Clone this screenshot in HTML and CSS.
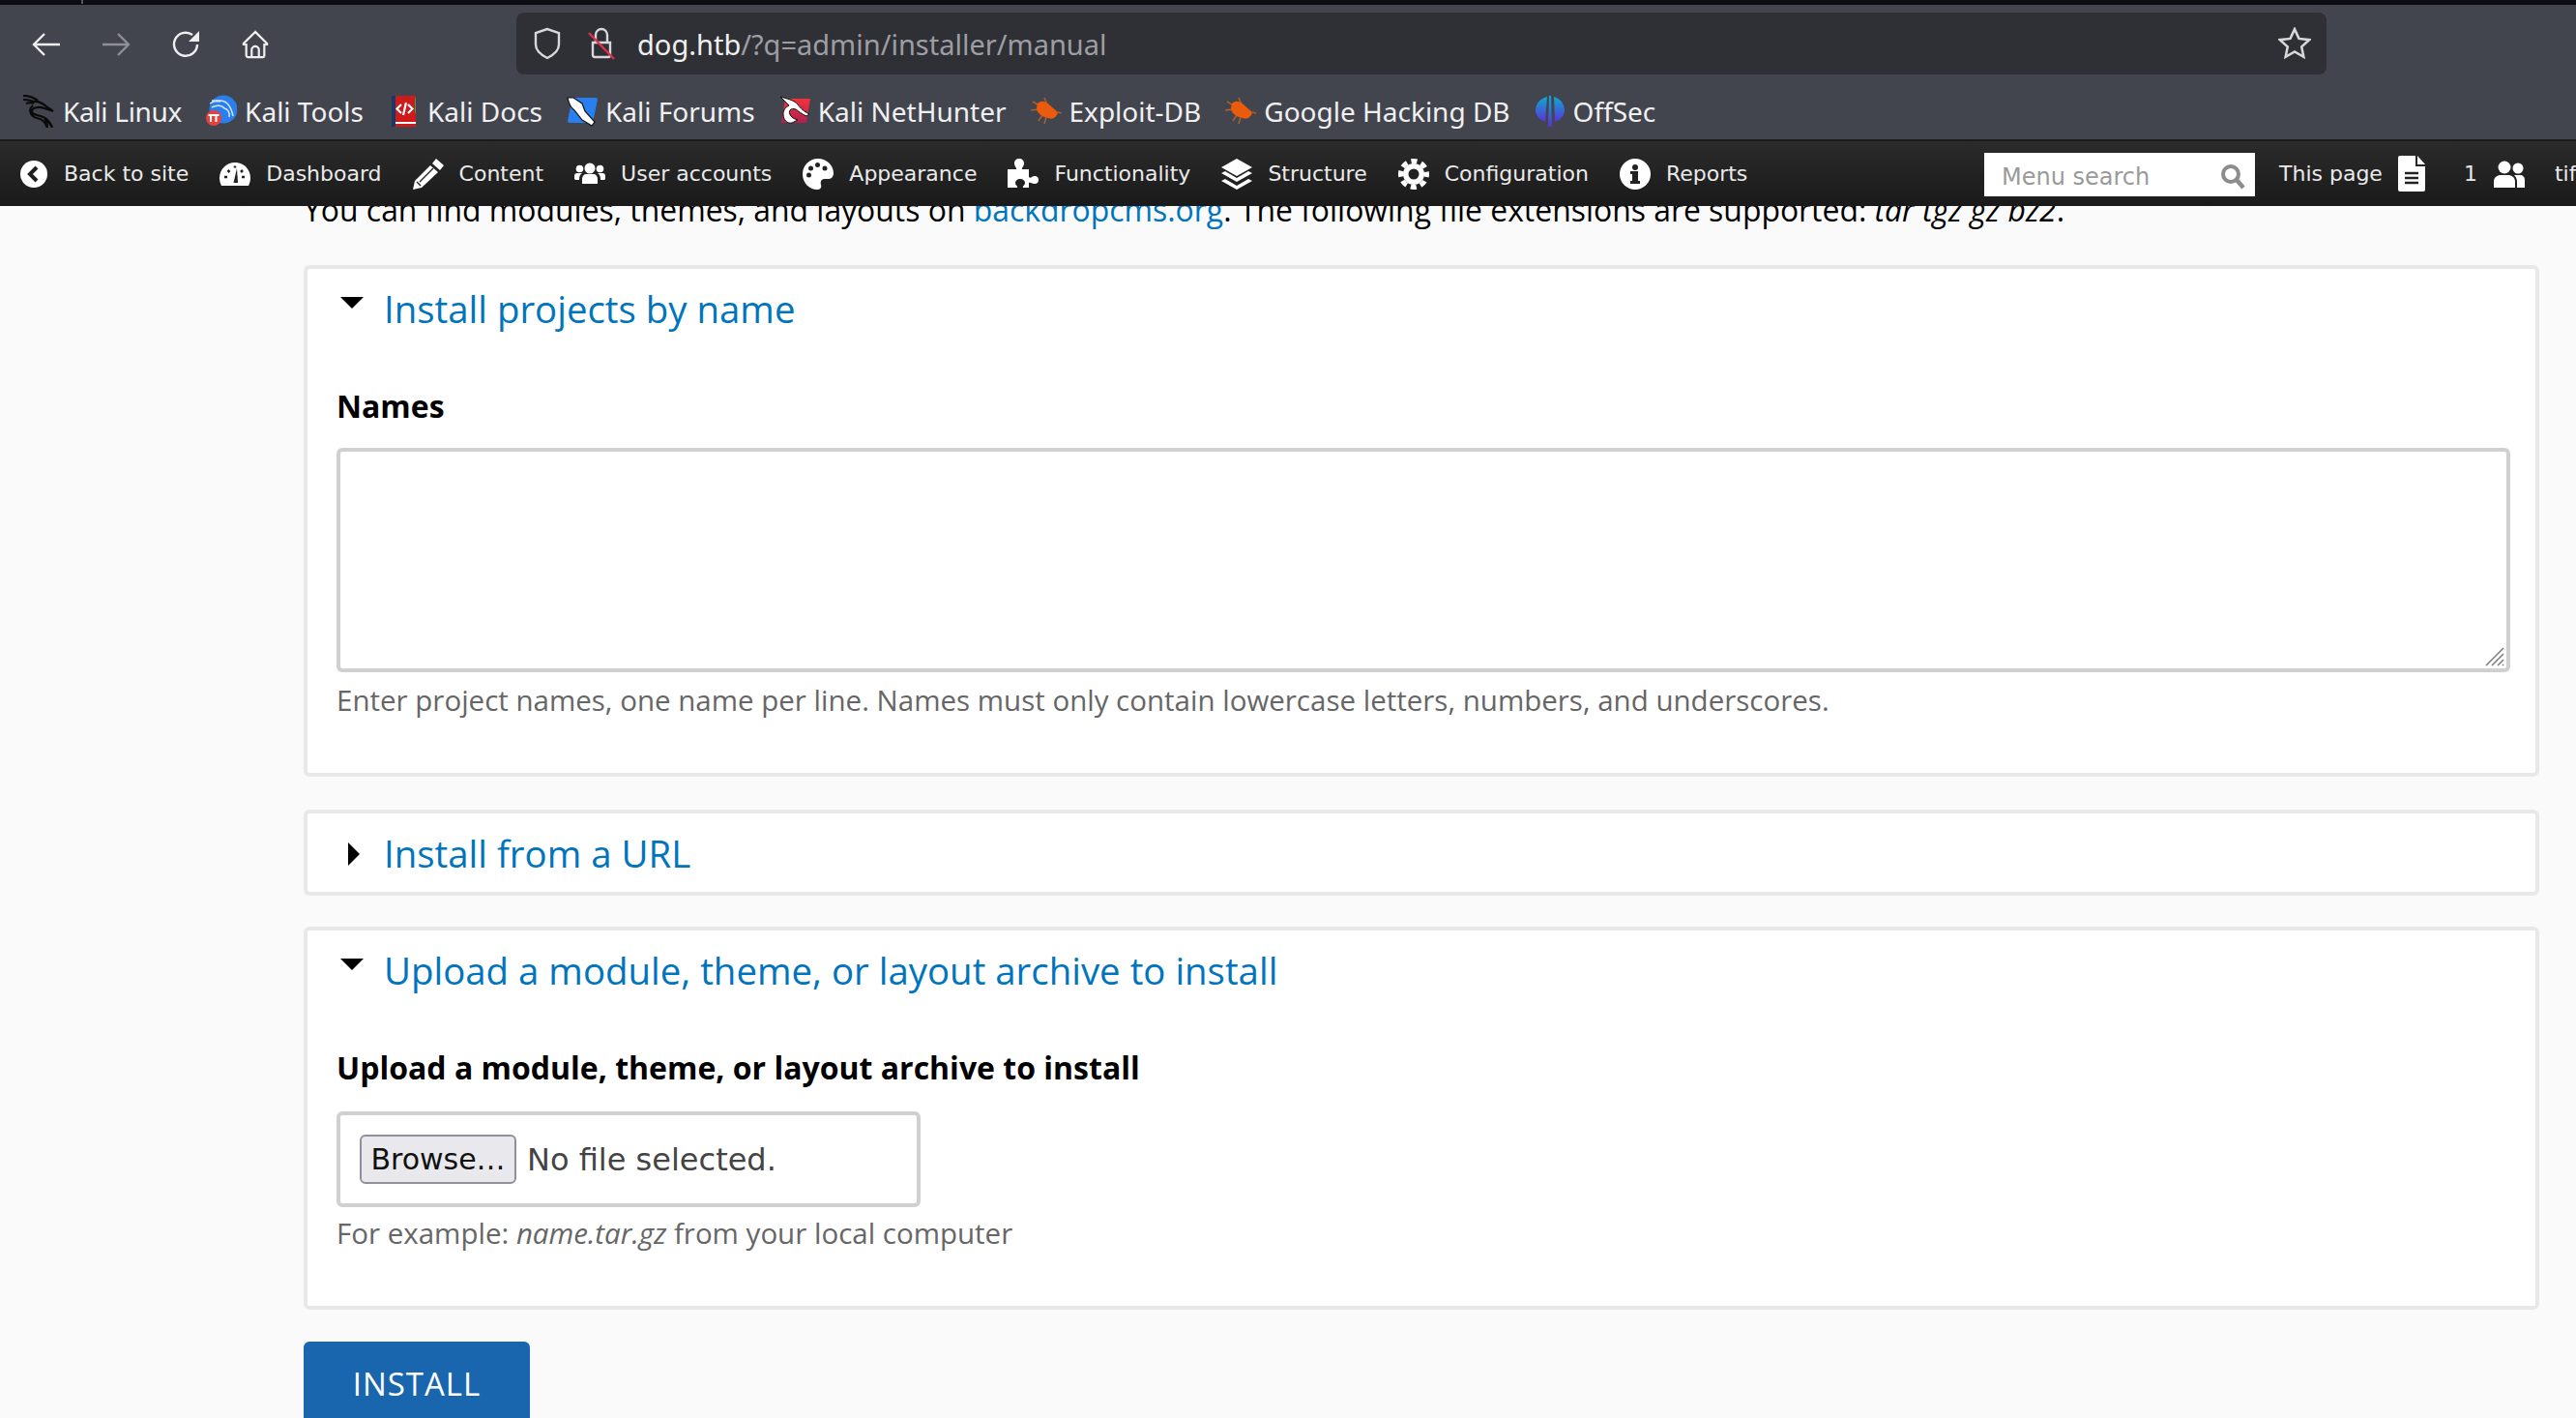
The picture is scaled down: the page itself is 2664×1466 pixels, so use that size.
FILE: index.html
```html
<!DOCTYPE html>
<html lang="en">
<head>
<meta charset="utf-8">
<title>Manual installation</title>
<link rel="stylesheet" href="styles.css">
</head>
<body>
<div class="topstrip"><span class="tabsep"></span></div>
<header class="chrome">
  <div class="navrow">
    <div class="navbtns">
      <svg class="navicon" viewBox="0 0 28 30"><path d="M28 15H2M12 4 1 15l11 11"/></svg>
      <svg class="navicon dim" viewBox="0 0 28 30"><path d="M0 15h26M16 4l11 11-11 11"/></svg>
      <svg class="navicon" viewBox="0 0 28 30"><path d="M26 15a12 12 0 1 1-5-10"/><path class="solid" d="M28 1v11H17Z"/></svg>
      <svg class="navicon" viewBox="0 0 30 30"><path d="M15 1 2 14v1h3v12a2 2 0 0 0 2 2h16a2 2 0 0 0 2-2V15h3v-1ZM11 29v-8a4 4 0 0 1 8 0v8"/></svg>
    </div>
    <div class="urlbar">
      <svg class="urlicon" viewBox="0 0 30 34"><path d="M15 2 3 6v12c0 7 6 11 12 14 6-3 12-7 12-14V6Z"/></svg>
      <svg class="urlicon lock" viewBox="0 0 28 34"><path d="M8 16V8a6 6 0 0 1 12 0v8M5 16h18v13a2 2 0 0 1-2 2H7a2 2 0 0 1-2-2Z"/><path class="slash" d="M1 6l26 27"/></svg>
      <span class="url"><span class="host">dog.htb</span>/?q=admin/installer/manual</span>
      <svg class="urlicon star" viewBox="0 0 32 32"><path d="m16 2 4.200 9.200 10 1.200-7.400 6.800 2 9.800-8.800-5-8.800 5 2-9.800-7.400-6.800 10-1.200Z"/></svg>
    </div>
  </div>
  <nav class="bookmarks">
    <a class="bm linux"><svg class="fav" viewBox="0 0 32 34"><path class="k" d="M0 1c6 0 11 2 15 5M0 5c5 0 9 1 12 3M3 9c3-1 6-1 8 0M8 8c6-3 13 1 17 5l6 4-9-3c-6-2-13-1-13 3 0 5 9 3 15 8 3 3 5 5 6 9-2-4-4-7-7-8 1 2 2 5 2 8-2-6-5-9-11-10-7-2-9-9-4-13"/></svg>Kali Linux</a>
    <a class="bm"><svg class="fav" viewBox="0 0 32 34"><circle cx="18" cy="15" r="14.500" fill="#2b7fec"/><path d="M4 9c6-4 14-4 18 0 3 3 5 8 6 13M6 13c5-3 11-2 13 1M19 14c4 1 6 5 5 9M6 6c3 0 6 0 9 1" fill="none" stroke="#d6e6ff" stroke-width="1.500"/><circle cx="8" cy="24" r="8" fill="#e5423c"/><path d="M5 21v7M10.500 21v7M2.500 21h11" stroke="#fff" stroke-width="2"/></svg>Kali Tools</a>
    <a class="bm doc"><svg class="fav" viewBox="0 0 25 32"><rect width="25" height="32" fill="#cf1a1a"/><rect width="4" height="32" fill="#17386b"/><rect x="4" y="27" width="21" height="2" fill="#fff"/><rect x="24" y="2" width="1" height="16" fill="#3c9a5f"/><path d="M10 9l-4.500 4.500L10 18M17 9l4.500 4.500L17 18M15 7l-3 13" fill="none" stroke="#fff" stroke-width="2.200"/></svg>Kali Docs</a>
    <a class="bm"><svg class="fav" viewBox="0 0 32 32"><path d="M6 2h24a2 2 0 0 1 2 2l-5 24H3a2 2 0 0 1-2-2Z" fill="#2a7ff0"/><path d="M1 2l6 0 9 6 3 8 10 11-3 4-10-6-8-10C4 12 2 7 1 2Z" fill="#fff" stroke="#111" stroke-width="1.200"/></svg>Kali Forums</a>
    <a class="bm"><svg class="fav" viewBox="0 0 32 32"><defs><linearGradient id="nh" x1="0" y1="0" x2="0" y2="1"><stop offset="0" stop-color="#f2333c"/><stop offset="1" stop-color="#b0204f"/></linearGradient></defs><path d="M6 3h26l-4 25H2Z" fill="url(#nh)"/><path d="M1 1c6 2 14 3 18 8 3 4 6 7 12 10l-3 2c-5-2-8-5-11-7-5-2-9 2-5 7 1 2 4 3 7 4l-6 3C8 29 4 25 4 19c0-4 2-7 6-9-3-3-6-6-9-9Z" fill="#fff" stroke="#111" stroke-width="1"/></svg>Kali NetHunter</a>
    <a class="bm"><svg class="fav bug" viewBox="0 0 32 32"><path d="M2 6l8 5M0 15l8-1M8 26l4-6M14 29l2-7M14 2l3 7M28 17l4 1" stroke="#a8622f" stroke-width="1.500"/><path d="M7 8c4-4 9-2 13 2l8 7c-1 5-5 8-10 6-6-1-12-5-12-10Z" fill="#ea5b0c"/></svg>Exploit-DB</a>
    <a class="bm"><svg class="fav bug" viewBox="0 0 32 32"><path d="M2 6l8 5M0 15l8-1M8 26l4-6M14 29l2-7M14 2l3 7M28 17l4 1" stroke="#a8622f" stroke-width="1.500"/><path d="M7 8c4-4 9-2 13 2l8 7c-1 5-5 8-10 6-6-1-12-5-12-10Z" fill="#ea5b0c"/></svg>Google Hacking DB</a>
    <a class="bm"><svg class="fav" viewBox="0 0 32 32"><defs><linearGradient id="os" x1="0" y1="0" x2="0" y2="1"><stop offset="0" stop-color="#0fa9cf"/><stop offset="1" stop-color="#5a32d8"/></linearGradient></defs><path d="M13 1C5 3 1 9 1 15c0 5 4 10 10 12ZM20 1c7 2 11 8 11 14 0 5-4 10-10 12Z" fill="url(#os)"/><path d="M15 0h2l1 32h-4Z" fill="url(#os)"/></svg>OffSec</a>
  </nav>
</header>

<nav class="adminbar">
  <div class="adminleft">
    <a class="ai back"><svg class="aicon" viewBox="0 0 28 28"><circle cx="14" cy="14" r="14" fill="#fff"/><path d="m17 7-7 7 7 7" fill="none" stroke="#1f1f1f" stroke-width="4"/></svg>Back to site</a>
    <a class="ai"><svg class="aicon" viewBox="0 0 32 32"><path d="M16 4C7 4 0 11 0 20c0 3 1 6 2 8h28c1-2 2-5 2-8 0-9-7-16-16-16Z" fill="#fff"/><path d="M14.500 25 18 10l1 15Z" fill="#222"/><path d="M5 19h3M8.500 12l2 2M16 7.500v2M26 19h-3M24 12l-2 2" stroke="#222" stroke-width="2.500"/></svg>Dashboard</a>
    <a class="ai"><svg class="aicon" viewBox="0 0 32 32"><path d="M24 0l8 7-4 5-8-7ZM18 7l8 7L9 30l-9 2 2-9Z" fill="#fff"/><path d="M21 10 7 24M4 24l4 4" fill="none" stroke="#222" stroke-width="1.400"/></svg>Content</a>
    <a class="ai"><svg class="aicon" viewBox="0 0 32 32"><g fill="#fff"><circle cx="16" cy="10" r="5.500"/><path d="M8 26v-5c0-3 2-5 4-5h8c2 0 4 2 4 5v5Z"/><circle cx="5.500" cy="10.500" r="3.800"/><circle cx="26.500" cy="10.500" r="3.800"/><path d="M0 21v-3c0-2 1-3 3-3h5c-2 1-3 3-3 7H1ZM32 21v-3c0-2-1-3-3-3h-5c2 1 3 3 3 7h4Z"/></g></svg>User accounts</a>
    <a class="ai"><svg class="aicon" viewBox="0 0 32 32"><path d="M16 0C7 0 0 7 0 16s7 16 15 16c3 0 5-2 4-5-1-4 1-6 4-6h4c3 0 5-3 5-6 0-8-7-15-16-15Z" fill="#fff"/><g fill="#222"><circle cx="6.500" cy="17" r="2.500"/><circle cx="8.500" cy="10" r="2.500"/><circle cx="15.500" cy="6.500" r="2.500"/><circle cx="23" cy="10" r="2.500"/></g></svg>Appearance</a>
    <a class="ai"><svg class="aicon" viewBox="0 0 32 32"><path d="M0 11h9c1-1-2-3-2-6 0-3 2-5 5-5s5 2 5 5c0 3-3 5-2 6h7v8c2 2 3-1 6-1s4 2 4 4-1 4-4 4-4-2-6-1v5h-6c-1-2 2-2 2-5 0-2-2-4-5-4s-5 2-5 4c0 3 3 3 2 5H0Z" fill="#fff"/></svg>Functionality</a>
    <a class="ai"><svg class="aicon" viewBox="0 0 32 32"><g fill="#fff"><path d="M16 0 32 9 16 18 0 9Z"/><path d="M4 13l12 7 12-7 4 2-16 9-16-9Z"/><path d="M4 21l12 7 12-7 4 2-16 9-16-9Z"/></g></svg>Structure</a>
    <a class="ai"><svg class="aicon" viewBox="0 0 32 32"><circle cx="16" cy="16" r="11" fill="#fff"/><circle cx="16" cy="16" r="13.500" fill="none" stroke="#fff" stroke-width="5" stroke-dasharray="6.100 4.500" stroke-dashoffset="3"/><circle cx="16" cy="16" r="5.500" fill="#222"/></svg>Configuration</a>
    <a class="ai"><svg class="aicon" viewBox="0 0 32 32"><circle cx="16" cy="16" r="16" fill="#fff"/><g fill="#222"><circle cx="16" cy="9" r="3"/><path d="M11 13h8v10h2v3H11v-3h2v-7h-2Z"/></g></svg>Reports</a>
  </div>
  <div class="adminright">
    <div class="msearch"><span class="mph">Menu search</span><svg class="msicon" viewBox="0 0 26 28"><circle cx="11" cy="11" r="8" fill="none" stroke="#8c8c8c" stroke-width="4"/><path d="m17 17 7 8" stroke="#8c8c8c" stroke-width="4.500"/></svg></div>
    <a class="ai page">This page<svg class="pgicon" viewBox="0 0 28 37"><path d="M2 0h16v11h10v24a2 2 0 0 1-2 2H2a2 2 0 0 1-2-2V2a2 2 0 0 1 2-2Z" fill="#fff"/><path d="M20 0l8 9h-8Z" fill="#fff"/><path d="M7 18h14M7 23h14M7 28h14" stroke="#222" stroke-width="2.500"/></svg></a>
    <a class="ai count">1<svg class="aicon" viewBox="0 0 32 32"><g fill="#fff"><circle cx="11" cy="9" r="6.500"/><circle cx="25" cy="10" r="5.500"/><path d="M0 30v-6c0-5 4-7 7-7h8c3 0 7 2 7 7v6ZM24 30v-6c0-3-1-5-3-7h6c3 0 5 2 5 5v8Z"/></g></svg></a>
    <span class="who">tiffany</span>
  </div>
</nav>

<main class="content">
  <p class="intro">You can find modules, themes, and layouts on <a class="link">backdropcms.org</a>. The following file extensions are supported: <em>tar tgz gz bz2</em>.</p>

  <section class="fs fs-first">
    <h2 class="legend"><span class="arrow down"></span><a class="link">Install projects by name</a></h2>
    <label class="flabel">Names</label>
    <div class="area"><svg class="grip" viewBox="0 0 20 20"><path d="M1 19 19 1M7 19 19 7M13 19l6-6M18 19l1-1"/></svg></div>
    <p class="hint">Enter project names, one name per line. Names must only contain lowercase letters, numbers, and underscores.</p>
  </section>

  <section class="fs fs-closed">
    <h2 class="legend"><span class="arrow right"></span><a class="link">Install from a URL</a></h2>
  </section>

  <section class="fs fs-third">
    <h2 class="legend"><span class="arrow down"></span><a class="link">Upload a module, theme, or layout archive to install</a></h2>
    <label class="flabel">Upload a module, theme, or layout archive to install</label>
    <div class="filebox"><span class="browse">Browse…</span><span class="nofile">No file selected.</span></div>
    <p class="hint">For example: <em>name.tar.gz</em> from your local computer</p>
  </section>

  <a class="install">INSTALL</a>
</main>
</body>
</html>
```

FILE: styles.css
```css
* { box-sizing: border-box; }
html, body { margin: 0; height: 100%; }
body { width: 2664px; height: 1466px; overflow: hidden; background: #fafafa; font-family: "Open Sans", sans-serif; color: #000; }

.topstrip { height: 5px; background: #0c0d13; }
.tabsep { display: block; width: 2px; height: 4px; margin-left: 84px; background: #55565c; }

.chrome { height: 141px; background: #42454e; border-bottom: 2px solid #1b1b1e; color: #f4f4f5; }
.navrow { height: 80px; display: flex; align-items: flex-start; padding-left: 34px; }
.navbtns { display: flex; gap: 44px; width: 500px; padding-top: 26px; }
.navicon { width: 28px; height: 30px; fill: none; stroke: #eee; stroke-width: 2.400; overflow: visible; }
.navicon.dim { stroke: #8f9096; }
.solid { fill: #eee; stroke: none; }
.urlbar { width: 1872px; height: 64px; margin-top: 8px; background: #2f3036; border-radius: 8px; display: flex; align-items: center; padding: 0 16px 0 17px; }
.urlicon { width: 30px; height: 34px; fill: none; stroke: #d8d8da; stroke-width: 2.400; flex: none; }
.urlicon.lock { margin-left: 27px; width: 28px; }
.slash { stroke: #e0304a; }
.url { margin-left: 23px; padding-top: 2px; font: 29px/40px "Noto Sans", sans-serif; color: #9d9ea2; flex: 1; }
.host { color: #f0f0f1; }
.urlicon.star { width: 34px; height: 34px; }

.bookmarks { height: 59px; display: flex; align-items: center; padding: 0 0 0 24px; gap: 25px; }
.bm { display: flex; align-items: center; gap: 8px; font: 28px/40px "Noto Sans", sans-serif; color: #f0f0f1; white-space: nowrap; }
.linux { letter-spacing: -0.300px; gap: 9px; }
.fav { width: 32px; height: 34px; flex: none; }
.doc .fav { width: 25px; height: 32px; margin-left: 4px; margin-right: 4px; }
.k { fill: none; stroke: #0a0a0a; stroke-width: 2.200; }

.adminbar { height: 67px; background: linear-gradient(#2b2b2b, #1a1a1a); display: flex; padding-left: 21px; color: #eee; position: relative; z-index: 2; }
.adminleft { display: flex; align-items: center; gap: 32px; width: 2031px; flex: none; }
.adminright { display: flex; align-items: center; flex: none; width: 612px; }
.ai { display: flex; align-items: center; gap: 16px; font: 22px/30px "DejaVu Sans", sans-serif; white-space: nowrap; color: #eaeaea; }
.aicon { width: 32px; height: 32px; flex: none; }
.back { gap: 17px; }
.back .aicon { width: 28px; height: 28px; }
.msearch { width: 280px; height: 45px; margin-top: 2px; background: #fff; display: flex; align-items: center; justify-content: space-between; padding: 4px 10px 0 18px; flex: none; }
.mph { font: 24px/30px "DejaVu Sans", sans-serif; color: #9a9a9a; }
.msicon { width: 26px; height: 28px; }
.page { margin-left: 25px; }
.pgicon { width: 28px; height: 37px; }
.count { margin-left: 40px; gap: 17px; }
.who { margin-left: 31px; font: 22px/30px "DejaVu Sans", sans-serif; color: #eaeaea; white-space: nowrap; }

.content { margin-top: -21px; padding: 0 38px 0 314px; }
.intro { margin: 0; height: 50px; font-size: 31.900px; line-height: 50px; white-space: nowrap; }
.link { color: #0074bd; }
.fs { background: #fff; border: 4px solid #e8e8e8; border-radius: 6px; padding: 0 26px 0 30px; }
.fs-first { height: 529px; margin-top: 32px; }
.fs-closed { height: 89px; margin-top: 34px; }
.fs-third { height: 396px; margin-top: 32px; }
.legend { margin: 0; height: 84px; padding-top: 15px; display: flex; align-items: flex-start; font-weight: 400; font-size: 38.400px; line-height: 52px; gap: 22px; white-space: nowrap; }
.arrow { display: block; flex: none; width: 24px; height: 36px; margin-left: 3px; position: relative; left: 1px; }
.arrow.down::before { content: ""; position: absolute; left: 0; top: 14px; border-left: 12px solid transparent; border-right: 12px solid transparent; border-top: 12px solid #000; }
.arrow.right::before { content: ""; position: absolute; left: 8px; top: 15px; border-top: 12px solid transparent; border-bottom: 12px solid transparent; border-left: 12px solid #000; }
.flabel { display: block; margin-top: 36px; font-weight: 700; font-size: 32px; line-height: 44px; }
.area { position: relative; height: 232px; margin-top: 21px; border: 4px solid #d0d0d0; border-radius: 6px; background: #fff; }
.grip { position: absolute; right: 2px; bottom: 2px; width: 20px; height: 20px; fill: none; stroke: #808080; stroke-width: 1.600; }
.hint { margin: 9px 0 0; font-size: 29.500px; line-height: 40px; color: #666; white-space: nowrap; }
.filebox { width: 604px; height: 99px; margin-top: 23px; border: 4px solid #d0d0d0; border-radius: 6px; background: #fff; display: flex; align-items: center; padding-left: 20px; gap: 11px; }
.filebox + .hint { margin-top: 7px; }
.browse { width: 162px; height: 51px; background: #e9e9ed; border: 2px solid #8f8f9d; border-radius: 6px; font: 30px/48px "DejaVu Sans", sans-serif; text-align: center; color: #111; }
.nofile { font: 32px/48px "DejaVu Sans", sans-serif; color: #444; }
.install { display: block; width: 234px; height: 90px; margin-top: 33px; background: #1a66ae; border-radius: 6px 6px 0 0; color: #fff; font-size: 33px; line-height: 88px; text-align: center; letter-spacing: 1px; }
```
